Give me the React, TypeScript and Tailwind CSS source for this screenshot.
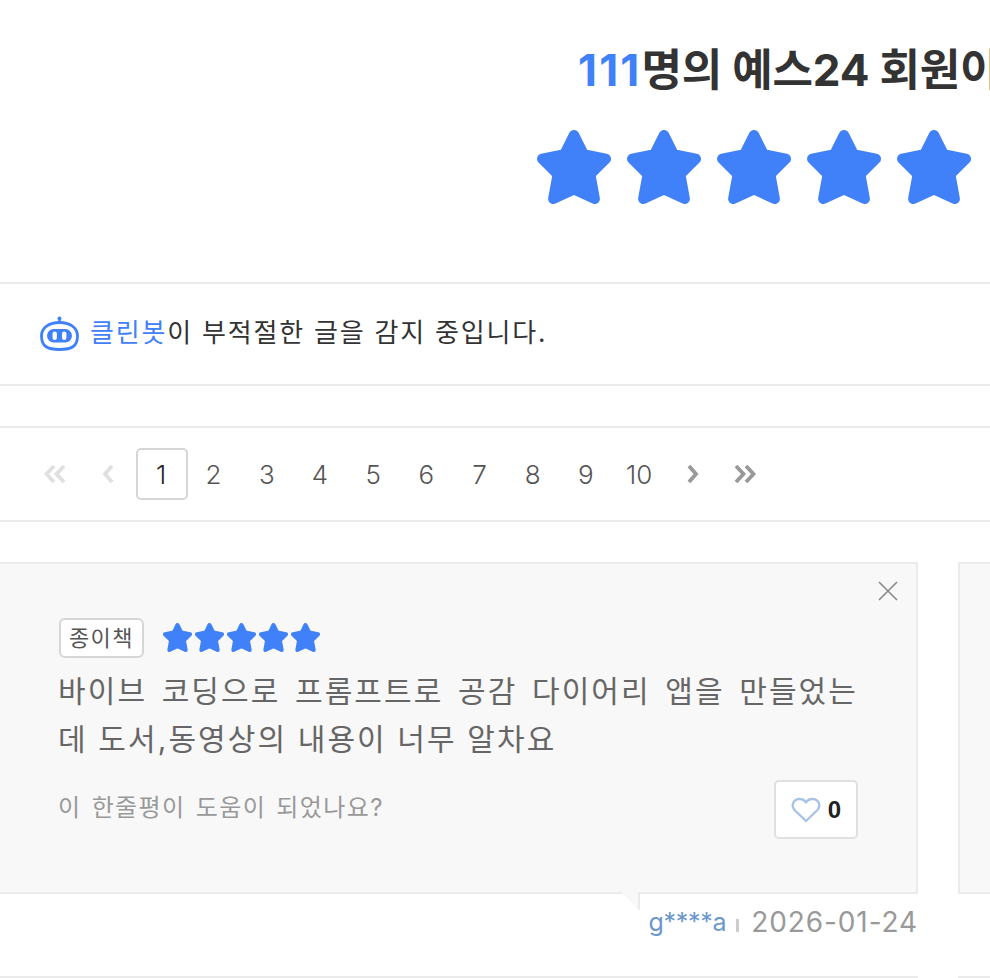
import React from 'react';

const FONT = "font-['Inter','Noto_Sans_CJK_KR',sans-serif]";

const Star: React.FC<{ className: string }> = ({ className }) => (
  <svg className={className} viewBox="0 0 100 100" aria-hidden="true">
    <path
      d="M50 7 L63 33 L93 39 L72 60 L78 93 L50 80 L22 93 L28 60 L7 39 L37 33 Z"
      fill="#4080f8"
      stroke="#4080f8"
      strokeWidth="14"
      strokeLinejoin="round"
    />
  </svg>
);

const Chevrons: React.FC<{ dir: 'left' | 'right'; double?: boolean; color: string }> = ({ dir, double, color }) => (
  <svg className="h-[22px] w-[26px]" viewBox="0 0 26 22" fill="none" stroke={color} strokeWidth="3.8" aria-hidden="true">
    {dir === 'left' ? (
      <>
        <path d={double ? 'M11 3 L3.5 11 L11 19' : 'M17 3 L10 11 L17 19'} />
        {double && <path d="M21 3 L13.5 11 L21 19" />}
      </>
    ) : (
      <>
        <path d={double ? 'M5 3 L12.5 11 L5 19' : 'M9 3 L16 11 L9 19'} />
        {double && <path d="M15 3 L22.5 11 L15 19" />}
      </>
    )}
  </svg>
);

const RobotIcon = () => (
  <svg className="h-[36px] w-[42px]" viewBox="0 0 42 36" fill="none" aria-hidden="true">
    <path d="M20.5 1 V6" stroke="#4080f8" strokeWidth="2.4" />
    <circle cx="20.5" cy="2.5" r="2" fill="#4080f8" />
    <path
      d="M2.5 20 C2.5 11 11 6.5 20.5 6.5 C30 6.5 38.5 11 38.5 20 C38.5 30 33 33.5 20.5 33.5 C8 33.5 2.5 30 2.5 20 Z"
      stroke="#4080f8"
      strokeWidth="2.8"
    />
    <rect x="8" y="13" width="25" height="13.5" rx="6.7" fill="#4080f8" />
    <rect x="13.5" y="15.5" width="4.4" height="8.5" rx="2.2" fill="#fff" />
    <rect x="23" y="15.5" width="4.4" height="8.5" rx="2.2" fill="#fff" />
  </svg>
);

const App: React.FC = () => {
  const pages = [2, 3, 4, 5, 6, 7, 8, 9, 10];

  return (
    <div className={`h-[978px] w-[990px] overflow-hidden bg-white text-[#333] ${FONT}`}>
      <section className="h-[282px] pt-[41px]">
        <h2 className="ml-[578px] whitespace-nowrap text-[44px] leading-[58px] font-bold tracking-[-0.2px] text-[#333]">
          <span className="tracking-[2.2px] text-[#4080f8]">111</span>명의 예스24 회원이
        </h2>
        <div className="mt-[31px] ml-[537px] flex gap-[16px]">
          {[0, 1, 2, 3, 4].map(i => (
            <Star key={i} className="h-[74px] w-[74px]" />
          ))}
        </div>
      </section>

      <div className="flex h-[104px] items-center gap-[10px] border-y-2 border-[#ebebeb] pl-[39px] text-[26px] tracking-[1.8px]">
        <RobotIcon />
        <p className="-mt-[3px] -ml-[1px]">
          <span className="text-[#4080f8]">클린봇</span>이 부적절한 글을 감지 중입니다.
        </p>
      </div>

      <nav className="mt-[40px] flex h-[96px] items-center border-y-2 border-[#ebebeb] pl-[43px] text-[26px] font-light text-[#555]">
        <Chevrons dir="left" double color="#e0e0e0" />
        <span className="ml-[26px]">
          <Chevrons dir="left" color="#e0e0e0" />
        </span>
        <span className="ml-[15px] flex h-[52px] w-[52px] items-center justify-center rounded-[5px] border-2 border-[#d6d6d6] pr-[2px] text-[#222]">
          1
        </span>
        <div className="-ml-[1px] flex">
          {pages.map(p => (
            <span key={p} className="flex w-[53.2px] justify-center">
              {p}
            </span>
          ))}
        </div>
        <span className="ml-[14px]">
          <Chevrons dir="right" color="#999" />
        </span>
        <span className="ml-[25px]">
          <Chevrons dir="right" double color="#999" />
        </span>
      </nav>

      <div className="mt-[40px] flex gap-[40px]">
        <div className="relative h-[416px] w-[918px] shrink-0 border-b-2 border-[#ebebeb]">
          <div className="relative h-[332px] border-t-2 border-r-2 border-b-2 border-[#ebebeb] bg-[#f8f8f8] pt-[54px] pr-[58px] pl-[58px]">
            <svg className="absolute top-[17px] right-[18px] h-[20px] w-[20px]" viewBox="0 0 20 20" stroke="#888" strokeWidth="1.6" aria-hidden="true">
              <path d="M1 1 L19 19 M19 1 L1 19" />
            </svg>
            <div className="flex items-center gap-[19px]">
              <span className="ml-[1px] flex h-[40px] w-[85px] items-center justify-center rounded-[6px] border-2 border-[#d6d6d6] bg-white text-[22px] tracking-[1.5px] text-[#555]">
                종이책
              </span>
              <div className="-mt-[2px] flex gap-[3px]">
                {[0, 1, 2, 3, 4].map(i => (
                  <Star key={i} className="h-[29px] w-[29px]" />
                ))}
              </div>
            </div>
            <p className="mt-[9px] text-justify text-[30px] leading-[48px] tracking-[2.1px] text-[#666]">
              바이브 코딩으로 프롬프트로 공감 다이어리 앱을 만들었는데 도서,동영상의 내용이 너무 알차요
            </p>
            <div className="mt-[17px] flex items-start justify-between">
              <p className="mt-[10px] text-[24px] tracking-[1.4px] text-[#999] [word-spacing:2px]">이 한줄평이 도움이 되었나요?</p>
              <button className="flex h-[59px] w-[84px] items-center justify-center gap-[7px] rounded-[5px] border-2 border-[#e0e0e0] bg-white">
                <svg className="h-[26px] w-[30px]" viewBox="0 0 30 26" fill="none" stroke="#a9c3e6" strokeWidth="2.4" aria-hidden="true">
                  <path d="M15 24 L3.5 13 C0 9 2 2.5 8 2 C11 1.8 13.5 3 15 5.5 C16.5 3 19 1.8 22 2 C28 2.5 30 9 26.5 13 Z" strokeLinejoin="round" />
                </svg>
                <span className="font-['Liberation_Sans',sans-serif] text-[24px] font-bold text-[#222]">0</span>
              </button>
            </div>
          </div>
          <div className="absolute top-[330px] left-[622px] h-0 w-0 border-t-[19px] border-l-[18px] border-t-[#ebebeb] border-l-transparent" />
          <div className="absolute top-[329px] left-[620px] h-0 w-0 border-t-[18px] border-l-[18px] border-t-[#f8f8f8] border-l-transparent" />
          <p className="mt-[10px] flex items-center justify-end leading-[36px] text-[#999]">
            <span className="text-[25px] tracking-[-0.3px] text-[#6b97cf]">g****a</span>
            <span className="mt-[6px] mr-[12px] ml-[10px] h-[13px] w-[3px] bg-[#ccc]" />
            <span className="text-[28px] tracking-[0.9px]">2026-01-24</span>
          </p>
        </div>
        <div className="h-[416px] w-[300px] shrink-0 border-b-2 border-[#ebebeb]">
          <div className="h-[332px] border-y-2 border-l-2 border-[#ebebeb] bg-[#f8f8f8]" />
        </div>
      </div>
    </div>
  );
};

export default App;
